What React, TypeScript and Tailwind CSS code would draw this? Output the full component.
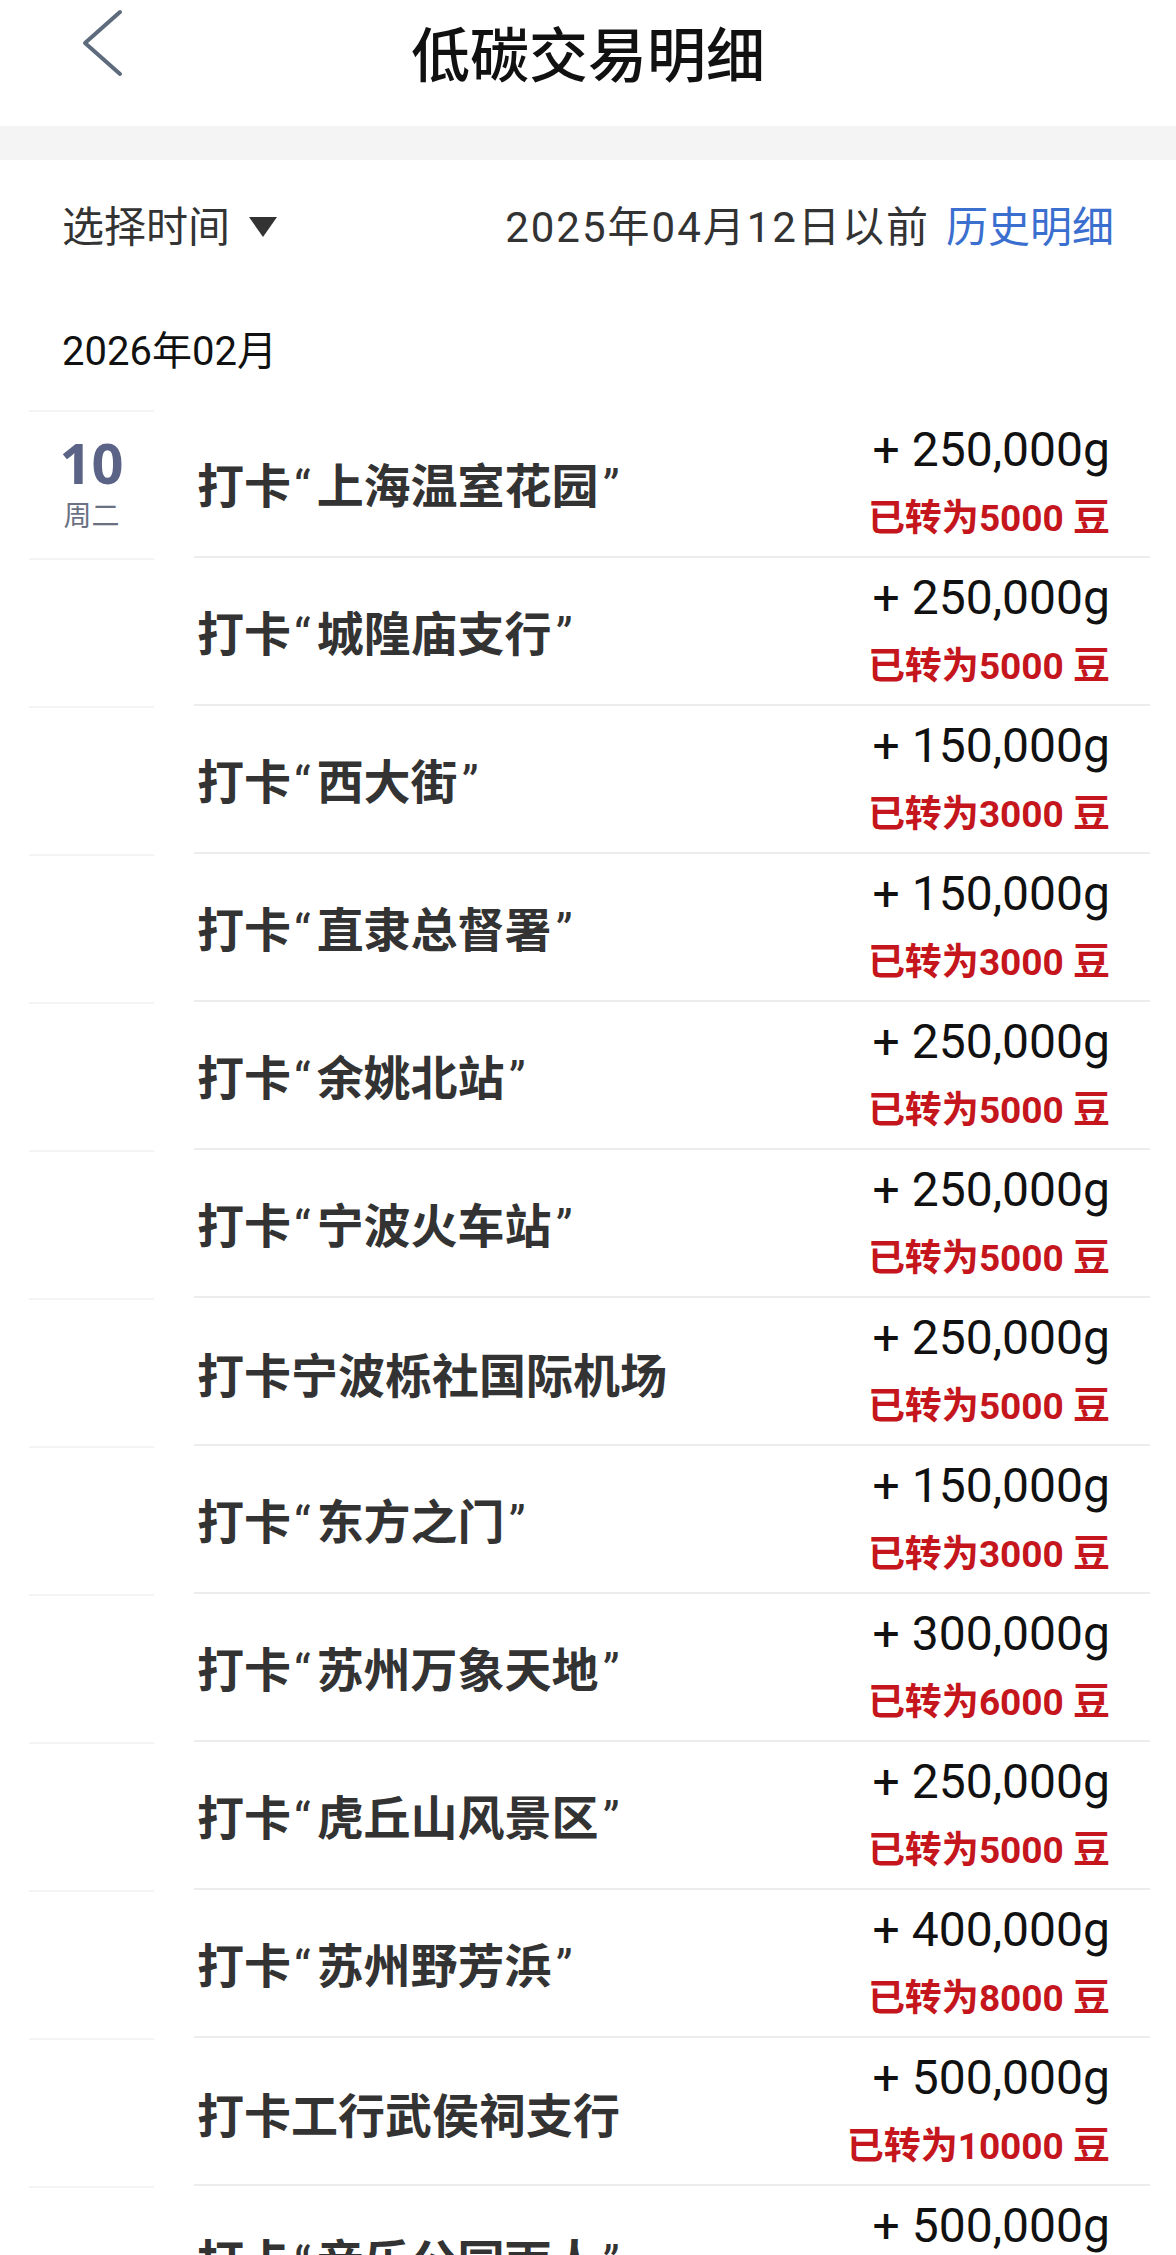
import React from "react";

// 交易记录
interface Record {
  id: number;
  title: string;
  grams: string;
  beans: string;
}

const records: Record[] = [
  { id: 1, title: "打卡“上海温室花园”", grams: "250,000", beans: "5000" },
  { id: 2, title: "打卡“城隍庙支行”", grams: "250,000", beans: "5000" },
  { id: 3, title: "打卡“西大街”", grams: "150,000", beans: "3000" },
  { id: 4, title: "打卡“直隶总督署”", grams: "150,000", beans: "3000" },
  { id: 5, title: "打卡“余姚北站”", grams: "250,000", beans: "5000" },
  { id: 6, title: "打卡“宁波火车站”", grams: "250,000", beans: "5000" },
  { id: 7, title: "打卡宁波栎社国际机场", grams: "250,000", beans: "5000" },
  { id: 8, title: "打卡“东方之门”", grams: "150,000", beans: "3000" },
  { id: 9, title: "打卡“苏州万象天地”", grams: "300,000", beans: "6000" },
  { id: 10, title: "打卡“虎丘山风景区”", grams: "250,000", beans: "5000" },
  { id: 11, title: "打卡“苏州野芳浜”", grams: "400,000", beans: "8000" },
  { id: 12, title: "打卡工行武侯祠支行", grams: "500,000", beans: "10000" },
  { id: 13, title: "打卡“音乐公园雨人”", grams: "500,000", beans: "10000" },
];

const BackIcon = () => (
  <svg width="44" height="68" viewBox="0 0 44 68" fill="none">
    <path d="M40 3 L5 34 L40 65" stroke="#5d6b7c" strokeWidth="4" strokeLinecap="round" strokeLinejoin="round" />
  </svg>
);

// 引号用西文字体，再补一点间距
const Title = ({ text }: { text: string }) => {
  const parts = text.split(/([“”])/);
  return (
    <>
      {parts.map((p, i) =>
        p === "“" ? (
          <span key={i} className="font-['Roboto',sans-serif] font-normal ml-[3px] mr-[6px]">“</span>
        ) : p === "”" ? (
          <span key={i} className="font-['Roboto',sans-serif] font-normal ml-[4px]">”</span>
        ) : (
          <span key={i}>{p}</span>
        )
      )}
    </>
  );
};

const Row = ({ record, index }: { record: Record; index: number }) => (
  <div className="flex h-[148px]">
    <div className="ml-[29px] w-[125px] border-t-2 border-[#f4f4f4] flex flex-col items-center pt-[24px]">
      {index === 0 && (
        <>
          <span className="text-[56px] leading-[52px] font-bold text-[#5b6386] font-['Open_Sans',sans-serif]">10</span>
          <span className="mt-[9px] text-[28px] leading-[34px] text-[#6b7182] font-['Noto_Sans_CJK_SC',sans-serif]">周二</span>
        </>
      )}
    </div>
    <div className="ml-[40px] mr-[26px] flex-1 border-b-2 border-[#ececec] flex items-center justify-between pl-[3px] pr-[40px]">
      <span className="pt-[5px] text-[47px] font-bold text-[#333333] font-['Noto_Sans_CJK_SC',sans-serif]">
        <Title text={record.title} />
      </span>
      <div className="flex flex-col items-end gap-[22px]">
        <span className="text-[48px] leading-[50px] text-[#111111] font-['Roboto',sans-serif]">
          + {record.grams}g
        </span>
        <span className="text-[37px] leading-[44px] font-bold text-[#c4161c]">
          已转为{record.beans} 豆
        </span>
      </div>
    </div>
  </div>
);

export default function App() {
  return (
    <div className="w-[1176px] min-h-[2255px] bg-white overflow-hidden font-['Roboto','Noto_Sans_CJK_SC',sans-serif]">
      {/* 顶部导航 */}
      <div className="h-[126px] grid grid-cols-[1fr_auto_1fr] items-center">
        <div className="pl-[80px] pb-[40px]">
          <BackIcon />
        </div>
        <h1 className="text-[59px] font-medium text-[#111111] pb-[12px]">低碳交易明细</h1>
        <div />
      </div>
      <div className="h-[34px] bg-[#f4f4f4]" />

      {/* 筛选 */}
      <div className="h-[134px] flex items-center justify-between px-[62px] text-[42px] text-[#333333]">
        <div className="flex items-center gap-[18px]">
          <span>选择时间</span>
          <svg width="30" height="22" viewBox="0 0 30 22">
            <path d="M1 1 H29 L15 21 Z" fill="#333333" />
          </svg>
        </div>
        <div className="flex items-center gap-[16px]">
          <span className="tracking-[2px]">2025年04月12日以前</span>
          <span className="text-[#3b6fcf]">历史明细</span>
        </div>
      </div>

      <div className="h-[116px] flex items-center px-[62px] text-[40px] text-[#111111]">2026年02月</div>

      {/* 列表 */}
      <div>
        {records.map((r, i) => (
          <Row key={r.id} record={r} index={i} />
        ))}
      </div>
    </div>
  );
}
